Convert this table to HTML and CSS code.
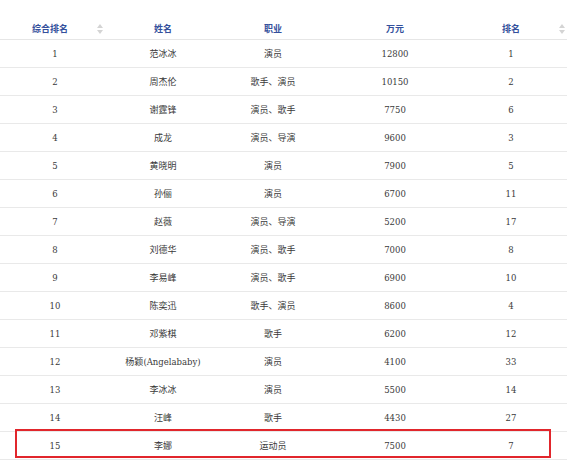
FILE: index.html
```html
<!DOCTYPE html>
<html>
<head>
<meta charset="utf-8">
<link rel="stylesheet" href="styles.css">
</head>
<body>
<div class="wrap">
<table class="rank">
<colgroup>
<col class="c1"><col class="c2"><col class="c3"><col class="c4"><col class="c5">
</colgroup>
<thead>
<tr>
<th class="sortable first">综合排名<span class="sort"><svg width="6" height="10" viewBox="0 0 6 10"><path d="M3 0 L6 4 L0 4 Z M3 10 L6 6 L0 6 Z" fill="#d4d4d4"/></svg></span></th>
<th>姓名</th>
<th>职业</th>
<th>万元</th>
<th class="sortable last">排名<span class="sort"><svg width="6" height="10" viewBox="0 0 6 10"><path d="M3 0 L6 4 L0 4 Z M3 10 L6 6 L0 6 Z" fill="#d4d4d4"/></svg></span></th>
</tr>
</thead>
<tbody>
<tr><td class="num">1</td><td>范冰冰</td><td>演员</td><td class="num">12800</td><td class="num last">1</td></tr>
<tr><td class="num">2</td><td>周杰伦</td><td>歌手、演员</td><td class="num">10150</td><td class="num last">2</td></tr>
<tr><td class="num">3</td><td>谢霆锋</td><td>演员、歌手</td><td class="num">7750</td><td class="num last">6</td></tr>
<tr><td class="num">4</td><td>成龙</td><td>演员、导演</td><td class="num">9600</td><td class="num last">3</td></tr>
<tr><td class="num">5</td><td>黄晓明</td><td>演员</td><td class="num">7900</td><td class="num last">5</td></tr>
<tr><td class="num">6</td><td>孙俪</td><td>演员</td><td class="num">6700</td><td class="num last">11</td></tr>
<tr><td class="num">7</td><td>赵薇</td><td>演员、导演</td><td class="num">5200</td><td class="num last">17</td></tr>
<tr><td class="num">8</td><td>刘德华</td><td>演员、歌手</td><td class="num">7000</td><td class="num last">8</td></tr>
<tr><td class="num">9</td><td>李易峰</td><td>演员、歌手</td><td class="num">6900</td><td class="num last">10</td></tr>
<tr><td class="num">10</td><td>陈奕迅</td><td>歌手、演员</td><td class="num">8600</td><td class="num last">4</td></tr>
<tr><td class="num">11</td><td>邓紫棋</td><td>歌手</td><td class="num">6200</td><td class="num last">12</td></tr>
<tr><td class="num">12</td><td>杨颖<span class="latin">(Angelababy)</span></td><td>演员</td><td class="num">4100</td><td class="num last">33</td></tr>
<tr><td class="num">13</td><td>李冰冰</td><td>演员</td><td class="num">5500</td><td class="num last">14</td></tr>
<tr><td class="num">14</td><td>汪峰</td><td>歌手</td><td class="num">4430</td><td class="num last">27</td></tr>
<tr class="hl"><td class="num">15</td><td>李娜</td><td>运动员</td><td class="num">7500</td><td class="num last">7</td></tr>
</tbody>
</table>
<div class="mark"></div>
</div>
</body>
</html>
```
FILE: styles.css
```css
html, body {
  margin: 0;
  padding: 0;
  background: #fff;
}
.wrap {
  position: relative;
  width: 567px;
  padding-top: 18px;
}
.rank {
  width: 567px;
  border-collapse: collapse;
  table-layout: fixed;
  font-family: "Noto Sans CJK SC", "Liberation Sans", sans-serif;
  font-size: 9px;
  color: #3a3a3a;
}
.c1 { width: 110px; }
.c2 { width: 106px; }
.c3 { width: 114px; }
.c4 { width: 130px; }
.c5 { width: 107px; }
.rank th {
  height: 21px;
  padding: 0;
  text-align: center;
  color: #34509c;
  font-weight: bold;
  border-bottom: 1px solid #e6e6e6;
  position: relative;
  vertical-align: middle;
}
.rank th.first { padding-right: 10px; }
.rank td {
  height: 27px;
  padding: 0;
  text-align: center;
  border-bottom: 1px solid #e9e9e9;
  vertical-align: middle;
}
.rank .last { padding-left: 0; padding-right: 5px; }
.rank td.num {
  font-family: "DejaVu Serif", "Liberation Serif", serif;
  font-size: 8.5px;
  color: #3a3a3a;
}
.latin {
  font-family: "DejaVu Serif", "Liberation Serif", serif;
  font-size: 8.5px;
}
.sort {
  position: absolute;
  top: 6px;
  right: 7px;
  line-height: 0;
}
.last .sort { right: 2px; }
.mark {
  position: absolute;
  left: 15px;
  top: 429px;
  width: 532px;
  height: 25px;
  border: 2px solid #e1262c;
}
```
